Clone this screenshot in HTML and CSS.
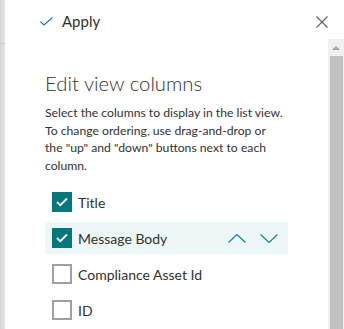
FILE: index.html
```html
<!DOCTYPE html>
<html lang="en">
<head>
    <meta charset="UTF-8">
    <title>Edit view columns</title>
    <link rel="stylesheet" href="styles.css">
</head>
<body>
    <div class="page">
        <div class="backdrop"><div class="backdrop-line"></div></div>
        <div class="panel">
            <div class="panel-header">
                <button class="apply-btn">
                    <svg width="13" height="9" viewBox="0 0 13 9"><path d="M0.5 4.5 L4 8 L12.5 0.5" fill="none" stroke="#0078d4" stroke-width="1.1"/></svg>
                    <span>Apply</span>
                </button>
                <button class="close-btn">
                    <svg width="12" height="12" viewBox="0 0 12 12"><path d="M0.5 0.5 L11.5 11.5 M11.5 0.5 L0.5 11.5" fill="none" stroke="#605e5c" stroke-width="1.1"/></svg>
                </button>
            </div>
            <div class="panel-body">
                <div class="content">
                    <h2>Edit view columns</h2>
                    <p class="desc">Select the columns to display in the list view. To change ordering, use drag-and-drop or the "up" and "down" buttons next to each column.</p>
                    <div class="columns">
                        <div class="column-row">
                            <span class="checkbox checked">
                                <svg width="12" height="10" viewBox="0 0 12 10"><path d="M1 5 L4.3 8.2 L11 1.5" fill="none" stroke="#fff" stroke-width="1.8"/></svg>
                            </span>
                            <span class="label">Title</span>
                        </div>
                        <div class="column-row active">
                            <span class="checkbox checked">
                                <svg width="12" height="10" viewBox="0 0 12 10"><path d="M1 5 L4.3 8.2 L11 1.5" fill="none" stroke="#fff" stroke-width="1.8"/></svg>
                            </span>
                            <span class="label">Message Body</span>
                            <div class="move-buttons">
                                <svg width="18" height="9" viewBox="0 0 18 9"><path d="M0.5 8.5 L9 0.5 L17.5 8.5" fill="none" stroke="#038387" stroke-width="1.1"/></svg>
                                <svg width="18" height="9" viewBox="0 0 18 9"><path d="M0.5 0.5 L9 8.5 L17.5 0.5" fill="none" stroke="#038387" stroke-width="1.1"/></svg>
                            </div>
                        </div>
                        <div class="column-row">
                            <span class="checkbox"></span>
                            <span class="label">Compliance Asset Id</span>
                        </div>
                        <div class="column-row">
                            <span class="checkbox"></span>
                            <span class="label">ID</span>
                        </div>
                    </div>
                </div>
                <div class="scrollbar">
                    <div class="scroll-arrow"></div>
                    <div class="scroll-thumb"></div>
                </div>
            </div>
        </div>
    </div>
</body>
</html>
```

FILE: styles.css
```css
body {
    margin: 0;
    font-family: Lato, "Noto Sans", sans-serif;
    color: #323130;
    background-color: #fff;
}
.page {
    display: flex;
    width: 344px;
    height: 329px;
    overflow: hidden;
}
.backdrop {
    width: 5px;
    flex-shrink: 0;
    background: linear-gradient(to right, #d6d6d6, #e4e4e4);
    padding-top: 43px;
}
.backdrop-line {
    height: 1px;
    background-color: #c8c8c8;
}
.panel {
    flex: 1;
    display: flex;
    flex-direction: column;
    background-color: #fff;
}
.panel-header {
    height: 39px;
    display: flex;
    justify-content: space-between;
    align-items: center;
    padding: 3px 16px 0 35px;
    box-sizing: border-box;
    flex-shrink: 0;
}
.apply-btn, .close-btn {
    background: none;
    border: none;
    padding: 0;
    display: flex;
    align-items: center;
    font-family: inherit;
    color: #323130;
    cursor: pointer;
}
.apply-btn span {
    font-size: 15px;
    margin-left: 9px;
}
.apply-btn svg {
    margin-top: 1px;
}
.close-btn {
    margin-top: 1px;
}
.panel-body {
    flex: 1;
    display: flex;
}
.content {
    flex: 1;
    padding: 30px 40px 0 40px;
}
h2 {
    margin: 0;
    font-size: 20.3px;
    font-weight: 300;
    line-height: 28px;
    color: #323130;
}
.desc {
    margin: 7px 0 12px 0;
    max-width: 238px;
    font-size: 12.2px;
    line-height: 17.6px;
}
.columns {
    display: flex;
    flex-direction: column;
    gap: 4px;
}
.column-row {
    height: 32px;
    display: flex;
    align-items: center;
    padding-left: 7px;
}
.column-row.active {
    background-color: #eef7f8;
}
.checkbox {
    width: 20px;
    height: 20px;
    box-sizing: border-box;
    border: 2px solid #a19f9d;
    display: flex;
    align-items: center;
    justify-content: center;
    flex-shrink: 0;
}
.checkbox.checked {
    background-color: #03787c;
    border-color: #03787c;
}
.label {
    margin-left: 6px;
    font-size: 14px;
}
.move-buttons {
    margin-left: auto;
    margin-right: 10px;
    display: flex;
    gap: 14px;
    align-items: center;
}
.scrollbar {
    width: 16px;
    background-color: #f0f0f0;
    display: flex;
    flex-direction: column;
    align-items: center;
}
.scroll-arrow {
    height: 17px;
    width: 100%;
    display: flex;
    align-items: center;
    justify-content: center;
}
.scroll-arrow::before {
    content: "";
    border-left: 4px solid transparent;
    border-right: 4px solid transparent;
    border-bottom: 4px solid #a3a3a3;
}
.scroll-thumb {
    flex: 1;
    width: 13px;
    margin-left: 1px;
    background-color: #c1c1c1;
}
```
